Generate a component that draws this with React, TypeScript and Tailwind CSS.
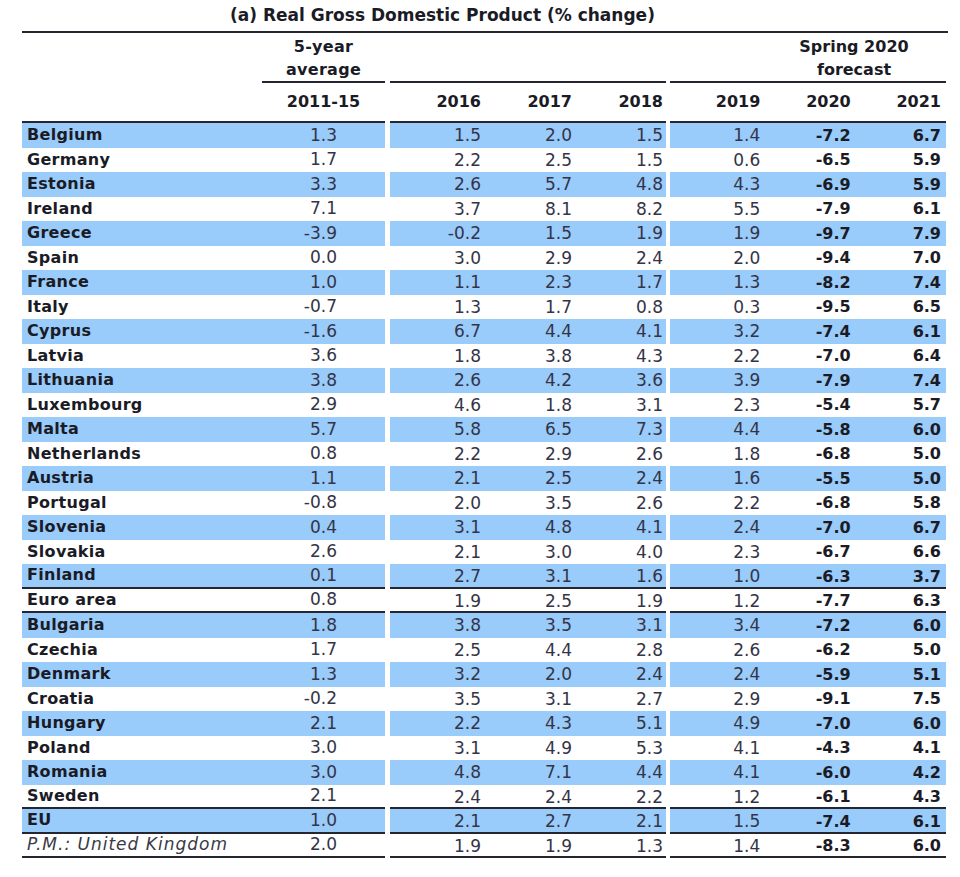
const rows: [string, string, string, string, string, string, string, string][] = [
  ['Belgium', '1.3', '1.5', '2.0', '1.5', '1.4', '-7.2', '6.7'],
  ['Germany', '1.7', '2.2', '2.5', '1.5', '0.6', '-6.5', '5.9'],
  ['Estonia', '3.3', '2.6', '5.7', '4.8', '4.3', '-6.9', '5.9'],
  ['Ireland', '7.1', '3.7', '8.1', '8.2', '5.5', '-7.9', '6.1'],
  ['Greece', '-3.9', '-0.2', '1.5', '1.9', '1.9', '-9.7', '7.9'],
  ['Spain', '0.0', '3.0', '2.9', '2.4', '2.0', '-9.4', '7.0'],
  ['France', '1.0', '1.1', '2.3', '1.7', '1.3', '-8.2', '7.4'],
  ['Italy', '-0.7', '1.3', '1.7', '0.8', '0.3', '-9.5', '6.5'],
  ['Cyprus', '-1.6', '6.7', '4.4', '4.1', '3.2', '-7.4', '6.1'],
  ['Latvia', '3.6', '1.8', '3.8', '4.3', '2.2', '-7.0', '6.4'],
  ['Lithuania', '3.8', '2.6', '4.2', '3.6', '3.9', '-7.9', '7.4'],
  ['Luxembourg', '2.9', '4.6', '1.8', '3.1', '2.3', '-5.4', '5.7'],
  ['Malta', '5.7', '5.8', '6.5', '7.3', '4.4', '-5.8', '6.0'],
  ['Netherlands', '0.8', '2.2', '2.9', '2.6', '1.8', '-6.8', '5.0'],
  ['Austria', '1.1', '2.1', '2.5', '2.4', '1.6', '-5.5', '5.0'],
  ['Portugal', '-0.8', '2.0', '3.5', '2.6', '2.2', '-6.8', '5.8'],
  ['Slovenia', '0.4', '3.1', '4.8', '4.1', '2.4', '-7.0', '6.7'],
  ['Slovakia', '2.6', '2.1', '3.0', '4.0', '2.3', '-6.7', '6.6'],
  ['Finland', '0.1', '2.7', '3.1', '1.6', '1.0', '-6.3', '3.7'],
  ['Euro area', '0.8', '1.9', '2.5', '1.9', '1.2', '-7.7', '6.3'],
  ['Bulgaria', '1.8', '3.8', '3.5', '3.1', '3.4', '-7.2', '6.0'],
  ['Czechia', '1.7', '2.5', '4.4', '2.8', '2.6', '-6.2', '5.0'],
  ['Denmark', '1.3', '3.2', '2.0', '2.4', '2.4', '-5.9', '5.1'],
  ['Croatia', '-0.2', '3.5', '3.1', '2.7', '2.9', '-9.1', '7.5'],
  ['Hungary', '2.1', '2.2', '4.3', '5.1', '4.9', '-7.0', '6.0'],
  ['Poland', '3.0', '3.1', '4.9', '5.3', '4.1', '-4.3', '4.1'],
  ['Romania', '3.0', '4.8', '7.1', '4.4', '4.1', '-6.0', '4.2'],
  ['Sweden', '2.1', '2.4', '2.4', '2.2', '1.2', '-6.1', '4.3'],
  ['EU', '1.0', '2.1', '2.7', '2.1', '1.5', '-7.4', '6.1'],
  ['P.M.: United Kingdom', '2.0', '1.9', '1.9', '1.3', '1.4', '-8.3', '6.0'],
];

// rows that carry a rule underneath
const ruled = new Set(['Finland', 'Euro area', 'Sweden', 'EU', 'P.M.: United Kingdom']);

export default function App() {
  return (
    <div className="w-[960px] h-[877px] bg-white pl-[22px] pr-[14px] font-['DejaVu_Sans',sans-serif] text-[16px] text-[#1b1b26]">
      <div className="h-[31px] flex items-center pl-[208px] font-bold text-[17px]">
        (a) Real Gross Domestic Product (% change)
      </div>
      <div className="w-[926px] h-[2px] bg-[#262630]" />

      {/* header */}
      <div className="flex gap-[5px] font-bold">
        <div className="flex w-[363px]">
          <div className="w-[240px] h-[90px] border-b-2 border-[#262630]" />
          <div className="w-[123px] flex flex-col">
            <div className="h-[50px] border-b-2 border-[#262630] flex flex-col items-center pt-[1.5px] leading-[23px] tracking-[0.3px]">
              <span>5-year</span>
              <span>average</span>
            </div>
            <div className="h-[40px] border-b-2 border-[#262630] flex items-center justify-center">
              2011-15
            </div>
          </div>
        </div>
        <div className="w-[276px] flex flex-col">
          <div className="h-[50px] border-b-2 border-[#262630]" />
          <div className="h-[40px] border-b-2 border-[#262630] grid grid-cols-3 items-center text-right pr-[3px]">
            <span>2016</span>
            <span>2017</span>
            <span>2018</span>
          </div>
        </div>
        <div className="ml-[-1px] w-[276px] flex flex-col">
          <div className="h-[50px] border-b-2 border-[#262630] flex flex-col items-center pl-[92px] pt-[1.5px] leading-[23px]">
            <span>Spring 2020</span>
            <span>forecast</span>
          </div>
          <div className="h-[40px] border-b-2 border-[#262630] grid grid-cols-3 items-center text-right pr-[5px]">
            <span>2019</span>
            <span>2020</span>
            <span>2021</span>
          </div>
        </div>
      </div>

      {/* body */}
      {rows.map((r, i) => {
        const bg = i % 2 === 0 ? 'bg-[#99cbfb]' : 'bg-white';
        const line = ruled.has(r[0]) ? 'border-b-2 border-[#262630]' : '';
        const pm = r[0].startsWith('P.M.');
        return (
          <div key={r[0]} className="flex gap-[5px] h-[24.5px]">
            <div className={`w-[363px] flex items-center ${bg} ${line}`}>
              <span
                className={`w-[240px] pl-[5px] ${pm ? 'italic font-normal text-[17px] tracking-[1px] text-[#3a3a46]' : 'font-bold tracking-[0.3px]'}`}
              >
                {r[0]}
              </span>
              <span className="w-[123px] text-right pr-[48px] text-[17px] text-[#343446]">{r[1]}</span>
            </div>
            <div className={`w-[276px] grid grid-cols-3 items-center text-right pr-[3px] text-[17px] text-[#343446] ${bg} ${line}`}>
              <span>{r[2]}</span>
              <span>{r[3]}</span>
              <span>{r[4]}</span>
            </div>
            <div className={`ml-[-1px] w-[276px] grid grid-cols-3 items-center text-right pr-[5px] ${bg} ${line}`}>
              <span className="text-[17px] text-[#343446]">{r[5]}</span>
              <span className="font-bold">{r[6]}</span>
              <span className="font-bold">{r[7]}</span>
            </div>
          </div>
        );
      })}
    </div>
  );
}
